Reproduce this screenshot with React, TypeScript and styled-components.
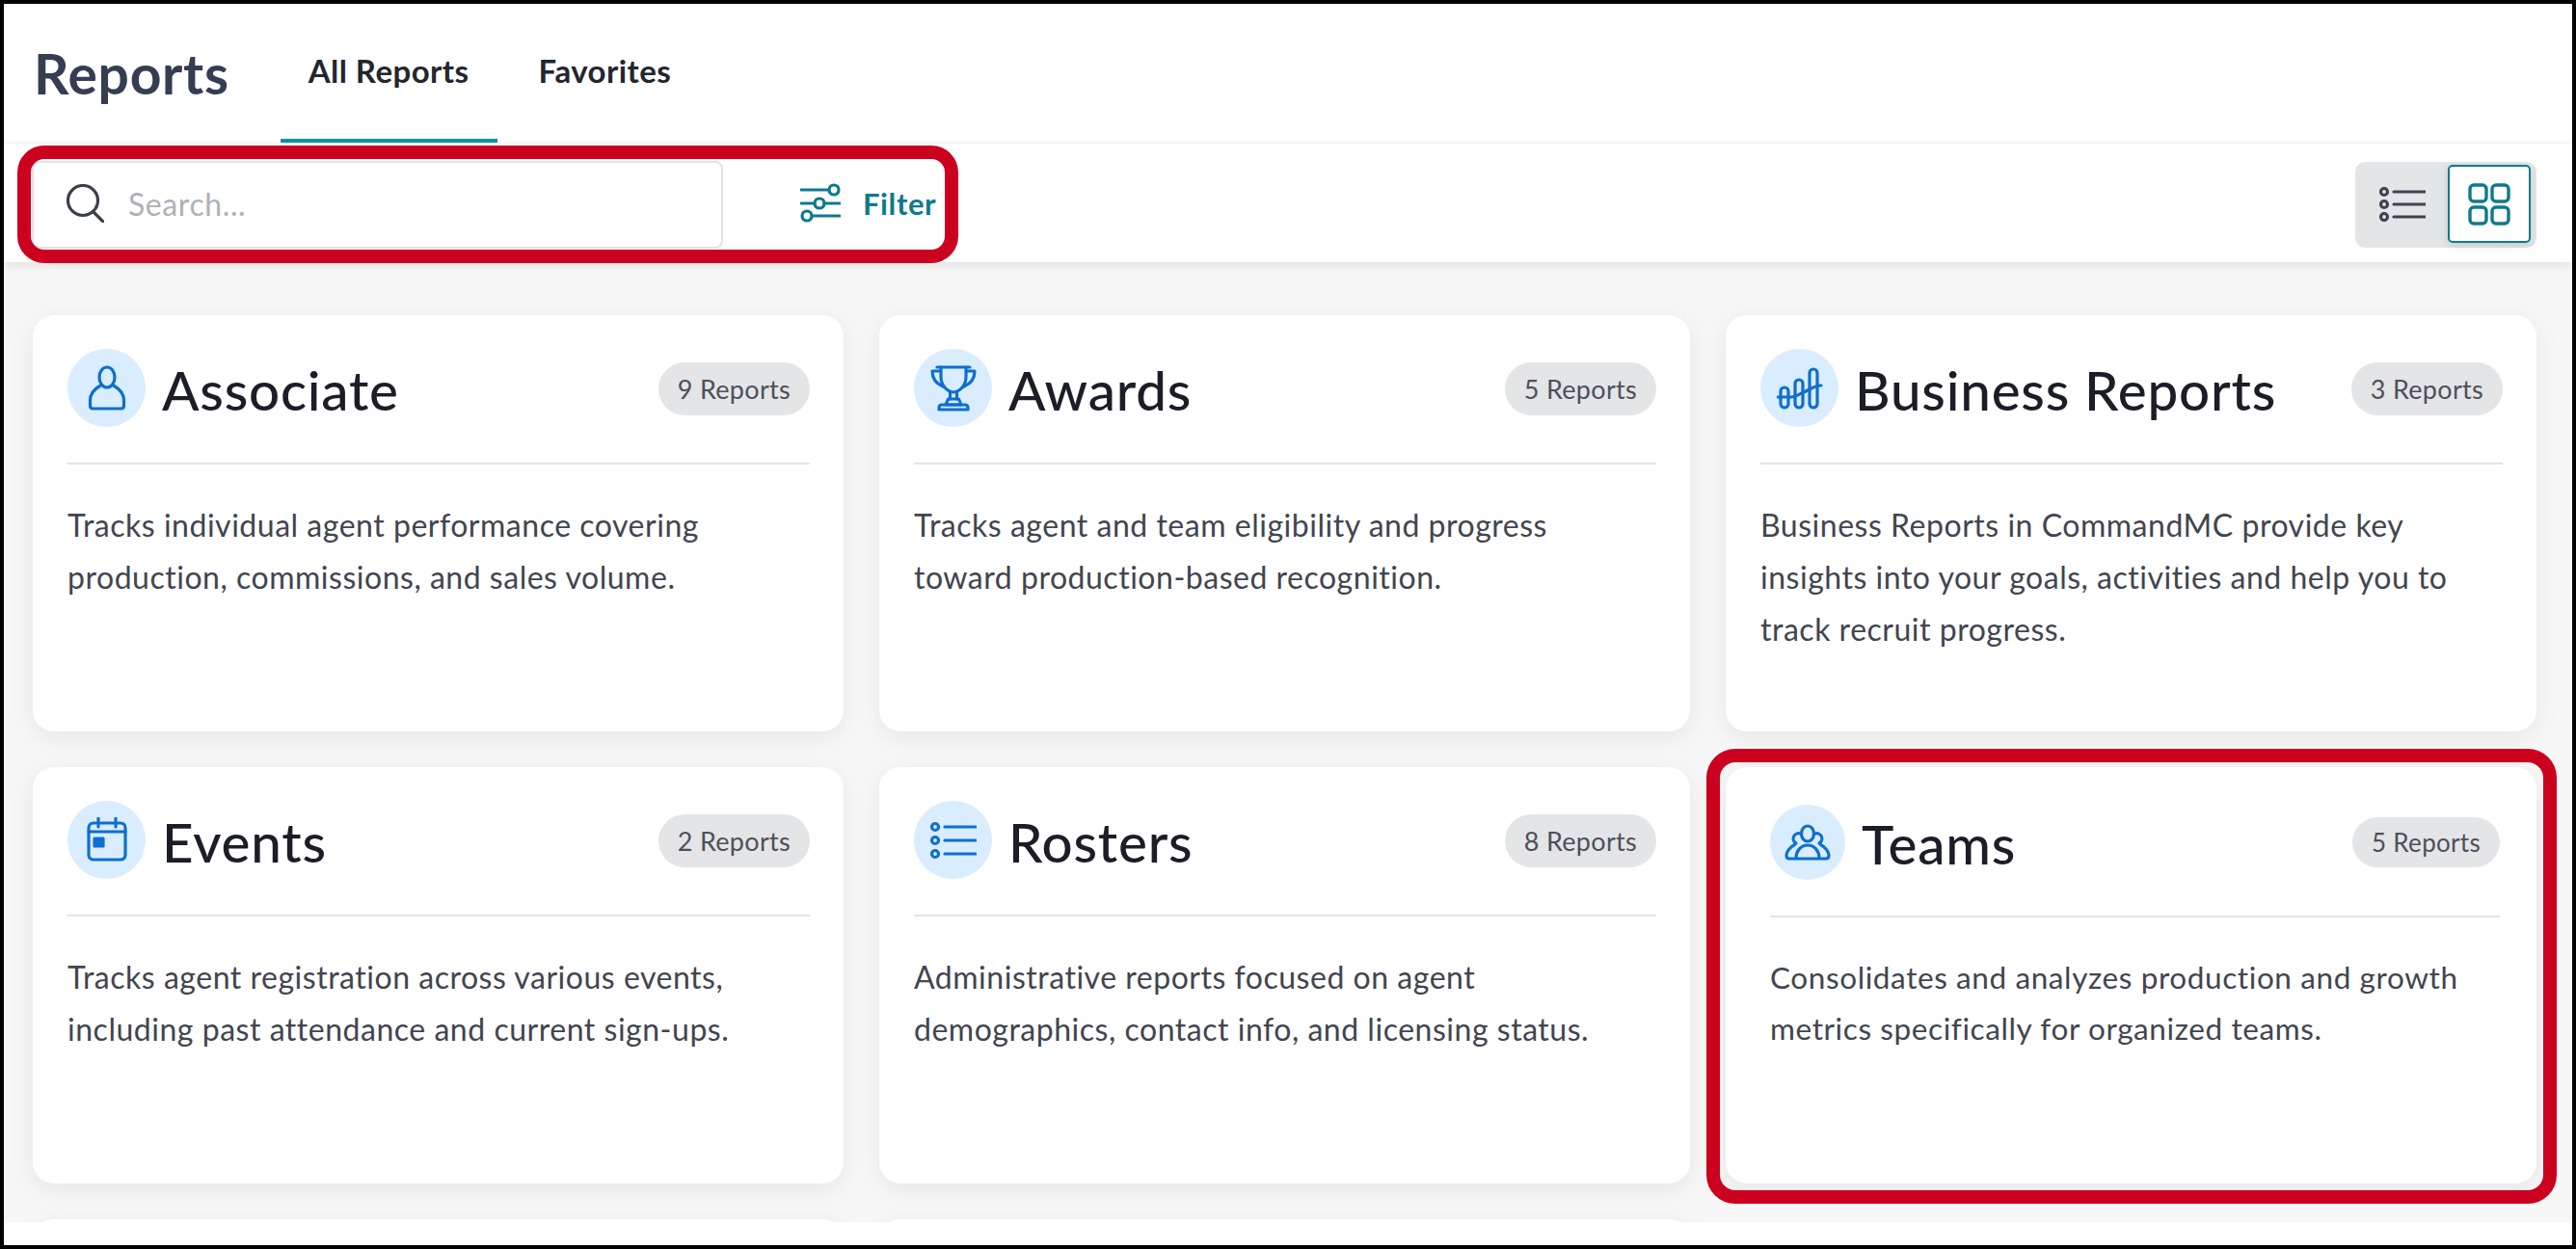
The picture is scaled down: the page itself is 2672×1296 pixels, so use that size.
import React from "react";
import styled, { createGlobalStyle } from "styled-components";

const GlobalStyle = createGlobalStyle`
  * { box-sizing: border-box; }
  html, body { margin: 0; padding: 0; background: #fff; }
  body { font-family: "Lato", "Noto Sans", "Liberation Sans", sans-serif; }
`;

const Page = styled.div`
  width: 2672px;
  height: 1296px;
  border: 4px solid #000;
  display: flex;
  flex-direction: column;
  background: #fff;
  overflow: hidden;
`;

const Header = styled.header`
  height: 144px;
  flex: none;
  display: flex;
  align-items: stretch;
  padding-left: 31px;
  background: #fff;
`;

const Title = styled.h1`
  margin: 0 53px 0 0;
  align-self: center;
  padding-top: 0;
  font-size: 57px;
  line-height: 64px;
  font-weight: 700;
  letter-spacing: 0.7px;
  color: #343d52;
`;

const Tab = styled.div<{ $active?: boolean }>`
  display: flex;
  align-items: center;
  padding: 0 29px 2px;
  margin-right: ${(p) => (p.$active ? "14px" : "0")};
  font-size: 33px;
  font-weight: 700;
  letter-spacing: 0.45px;
  color: #23262f;
  border-bottom: 4px solid ${(p) => (p.$active ? "#0b95a5" : "transparent")};
`;

const Toolbar = styled.div`
  position: relative;
  z-index: 2;
  height: 124px;
  flex: none;
  display: flex;
  align-items: center;
  justify-content: space-between;
  padding: 4px 37px 0 29px;
  background: #fff;
  border-top: 1px solid #f1f1f1;
  box-shadow: 0 3px 10px rgba(0, 0, 0, 0.09);
`;

const SearchGroup = styled.div`
  position: relative;
  width: 947px;
  height: 91px;
  display: flex;
  align-items: center;
`;

const Highlight = styled.div<{ $top: number; $right: number; $bottom: number; $left: number; $radius: number }>`
  position: absolute;
  top: ${(p) => p.$top}px;
  right: ${(p) => p.$right}px;
  bottom: ${(p) => p.$bottom}px;
  left: ${(p) => p.$left}px;
  border: 14px solid #cc001f;
  border-radius: ${(p) => p.$radius}px;
  pointer-events: none;
  z-index: 3;
`;

const SearchBox = styled.div`
  width: 717px;
  height: 91px;
  display: flex;
  align-items: center;
  padding: 0 0 3px 33px;
  gap: 25px;
  background: #fff;
  border: 2px solid #e3e3e3;
  border-radius: 8px;
`;

const Placeholder = styled.span`
  font-size: 32px;
  letter-spacing: 0.6px;
  color: #aeb1b8;
`;

const FilterButton = styled.div`
  display: flex;
  align-items: center;
  gap: 23px;
  margin-left: 80px;
  padding-bottom: 3px;
  font-size: 31px;
  font-weight: 700;
  letter-spacing: 0.6px;
  color: #0e7a8c;
`;

const Toggle = styled.div`
  width: 188px;
  height: 89px;
  display: flex;
  align-items: center;
  justify-content: space-between;
  padding: 0 6px 2px 25px;
  background: #e4e5e7;
  border-radius: 10px;
`;

const ToggleActive = styled.div`
  width: 86px;
  height: 81px;
  display: flex;
  align-items: center;
  justify-content: center;
  background: #fff;
  border: 2px solid #0e7a8c;
  border-radius: 5px;
  box-shadow: 0 3px 8px rgba(0, 0, 0, 0.12);
`;

const Content = styled.main`
  flex: 1;
  min-height: 0;
  overflow: hidden;
  background: #f7f7f7;
  padding: 55px 37px 0 30px;
`;

const Grid = styled.div`
  display: grid;
  grid-template-columns: repeat(3, 841px);
  grid-auto-rows: 432px;
  gap: 37px;
`;

const Card = styled.article<{ $highlighted?: boolean }>`
  position: relative;
  background: #fff;
  border-radius: 22px;
  box-shadow: 0 6px 26px rgba(0, 0, 0, 0.075);
  padding: ${(p) => (p.$highlighted ? "39px 38px 0 46px" : "35px 35px 0 36px")};
`;

const CardHead = styled.div<{ $highlighted?: boolean }>`
  display: flex;
  align-items: center;
  height: ${(p) => (p.$highlighted ? "78px" : "81px")};
  gap: 17px;
`;

const IconCircle = styled.div<{ $highlighted?: boolean }>`
  flex: none;
  width: ${(p) => (p.$highlighted ? "78px" : "81px")};
  height: ${(p) => (p.$highlighted ? "78px" : "81px")};
  border-radius: 50%;
  background: #d9edff;
  display: flex;
  align-items: center;
  justify-content: center;
`;

const CardTitle = styled.h2`
  flex: 1;
  margin: 0;
  font-size: 56.5px;
  line-height: 64px;
  font-weight: 500;
  letter-spacing: 0.8px;
  color: #1b1d27;
  padding-top: 2px;
`;

const Badge = styled.span<{ $highlighted?: boolean }>`
  flex: none;
  height: ${(p) => (p.$highlighted ? "52px" : "55px")};
  padding: 0 ${(p) => (p.$highlighted ? "20px" : "20px")};
  margin-top: ${(p) => (p.$highlighted ? "-1px" : "2px")};
  display: flex;
  align-items: center;
  border-radius: 28px;
  background: #e4e5e7;
  font-size: ${(p) => (p.$highlighted ? "26px" : "27px")};
  letter-spacing: 0.3px;
  color: #4d505a;
`;

const Divider = styled.hr`
  margin: 37px 0 0;
  border: 0;
  height: 2px;
  background: #e3e3e3;
`;

const Description = styled.p<{ $highlighted?: boolean }>`
  margin: 36px 0 0;
  max-width: 762px;
  font-size: ${(p) => (p.$highlighted ? "31.5px" : "32px")};
  line-height: ${(p) => (p.$highlighted ? "53px" : "54px")};
  letter-spacing: ${(p) => (p.$highlighted ? "0.6px" : "0.52px")};
  color: #41454f;
`;

const BottomBar = styled.div`
  height: 24px;
  flex: none;
  background: #fff;
  position: relative;
  z-index: 2;
`;

const Svg = styled.svg`
  display: block;
  flex: none;
  fill: none;
  stroke: currentColor;
  stroke-linecap: round;
  stroke-linejoin: round;
`;

const CardSvg = styled(Svg)`
  width: 48px;
  height: 48px;
  stroke-width: 3.2;
  color: #0f6fce;
`;

const SearchSvg = styled(Svg)`
  width: 40px;
  height: 40px;
  stroke-width: 3.2;
  color: #3a3f4c;
`;

const FilterSvg = styled(Svg)`
  width: 42px;
  height: 44px;
  stroke-width: 3.2;
  color: #0e7a8c;
`;

const ListSvg = styled(Svg)`
  width: 48px;
  height: 36px;
  stroke-width: 3.2;
  color: #3f4350;
`;

const GridSvg = styled(Svg)`
  width: 44px;
  height: 44px;
  stroke-width: 3.4;
  color: #0e7a8c;
`;

const PersonIcon = () => (
  <CardSvg viewBox="0 0 48 48">
    <ellipse cx="24" cy="12.5" rx="8" ry="10.5" />
    <path d="M16.5 21.5C10.500 25 6.500 30 6.500 36.500v5.500c0 2 1.200 3 3 3h29c1.800 0 3-1 3-3v-5.500c0-6.500-4-11.500-10-15" />
  </CardSvg>
);

const TrophyIcon = () => (
  <CardSvg viewBox="0 0 48 48">
    <path d="M7 2h34" />
    <path d="M11 2v10c0 9 6 15 13 16 7-1 13-7 13-16V2" />
    <path d="M10 6H2c0 8 4 13 11 16" />
    <path d="M38 6h8c0 8-4 13-11 16" />
    <path d="M20.500 28v7M27.500 28v7" />
    <path d="M18.500 35h11l2.500 6H16z" />
    <path d="M9 46v-1.500c0-2 1-3.500 3-3.500h24c2 0 3 1.500 3 3.500V46z" />
  </CardSvg>
);

const BarsIcon = () => (
  <CardSvg viewBox="0 0 48 48">
    <rect x="4" y="23" width="8" height="21" rx="4" />
    <rect x="19" y="15" width="8" height="29" rx="4" />
    <rect x="34" y="4" width="8" height="40" rx="4" />
    <path d="M1 33h14c5 0 8-3 13-5 7-3 11-7 18-7" />
  </CardSvg>
);

const CalendarIcon = () => (
  <CardSvg viewBox="0 0 48 48">
    <rect x="5" y="6" width="38" height="38" rx="5" />
    <path d="M15 1v9M33 1v9M5 15h38" />
    <rect x="11" y="22" width="9" height="8" fill="currentColor" />
  </CardSvg>
);

const RosterIcon = () => (
  <CardSvg viewBox="0 0 48 48">
    <circle cx="5" cy="10" r="3.500" />
    <circle cx="5" cy="24" r="3.500" />
    <circle cx="5" cy="38" r="3.500" />
    <path d="M15 10h32M15 24h32M15 38h32" />
  </CardSvg>
);

const TeamIcon = () => (
  <CardSvg viewBox="0 0 48 48">
    <ellipse cx="24" cy="15" rx="6.500" ry="8" />
    <path d="M16.500 15a5.500 5.500 0 0 0-4.500 10" />
    <path d="M31.500 15a5.500 5.500 0 0 1 4.500 10" />
    <path d="M12 40c0-7 5-13 12-13s12 6 12 13" />
    <path d="M10.500 26.500C5.500 29 2 34 2 37.500 2 39.500 3 41 5 41h38c2 0 3-1.500 3-3.500 0-3.500-3.500-8.500-8.500-11" />
  </CardSvg>
);

const reports = [
  { title: "Associate", count: "9 Reports", icon: <PersonIcon />, text: "Tracks individual agent performance covering production, commissions, and sales volume." },
  { title: "Awards", count: "5 Reports", icon: <TrophyIcon />, text: "Tracks agent and team eligibility and progress toward production-based recognition." },
  { title: "Business Reports", count: "3 Reports", icon: <BarsIcon />, text: "Business Reports in CommandMC provide key insights into your goals, activities and help you to track recruit progress." },
  { title: "Events", count: "2 Reports", icon: <CalendarIcon />, text: "Tracks agent registration across various events, including past attendance and current sign-ups." },
  { title: "Rosters", count: "8 Reports", icon: <RosterIcon />, text: "Administrative reports focused on agent demographics, contact info, and licensing status." },
  { title: "Teams", count: "5 Reports", icon: <TeamIcon />, text: "Consolidates and analyzes production and growth metrics specifically for organized teams.", highlighted: true },
];

export default function App() {
  return (
    <Page>
      <GlobalStyle />
      <Header>
        <Title>Reports</Title>
        <Tab $active>All Reports</Tab>
        <Tab>Favorites</Tab>
      </Header>
      <Toolbar>
        <SearchGroup>
          <SearchBox>
            <SearchSvg viewBox="0 0 40 40">
              <circle cx="18" cy="17" r="15.500" />
              <path d="M29 29l10 10" />
            </SearchSvg>
            <Placeholder>Search...</Placeholder>
          </SearchBox>
          <FilterButton>
            <FilterSvg viewBox="0 0 42 44">
              <circle cx="35" cy="8" r="5" />
              <circle cx="20" cy="22" r="5" />
              <circle cx="7" cy="35" r="5" />
              <path d="M1 8h29M1 22h14M25 22h16M12 35h29" />
            </FilterSvg>
            Filter
          </FilterButton>
          <Highlight $top={-16} $right={-14} $bottom={-15} $left={-15} $radius={28} />
        </SearchGroup>
        <Toggle>
          <ListSvg viewBox="0 0 48 36">
            <circle cx="5" cy="5" r="3.500" />
            <circle cx="5" cy="18" r="3.500" />
            <circle cx="5" cy="31" r="3.500" />
            <path d="M15 5h33M15 18h33M15 31h33" />
          </ListSvg>
          <ToggleActive>
            <GridSvg viewBox="0 0 44 44">
              <rect x="2" y="2" width="17" height="17" rx="4" />
              <rect x="25" y="2" width="17" height="17" rx="4" />
              <rect x="2" y="25" width="17" height="17" rx="4" />
              <rect x="25" y="25" width="17" height="17" rx="4" />
            </GridSvg>
          </ToggleActive>
        </Toggle>
      </Toolbar>
      <Content>
        <Grid>
          {reports.map((r) => (
            <Card key={r.title} $highlighted={r.highlighted}>
              <CardHead $highlighted={r.highlighted}>
                <IconCircle $highlighted={r.highlighted}>{r.icon}</IconCircle>
                <CardTitle>{r.title}</CardTitle>
                <Badge $highlighted={r.highlighted}>{r.count}</Badge>
              </CardHead>
              <Divider />
              <Description $highlighted={r.highlighted}>{r.text}</Description>
              {r.highlighted && <Highlight $top={-19} $right={-21} $bottom={-21} $left={-20} $radius={30} />}
            </Card>
          ))}
          <Card />
          <Card />
        </Grid>
      </Content>
      <BottomBar />
    </Page>
  );
}
